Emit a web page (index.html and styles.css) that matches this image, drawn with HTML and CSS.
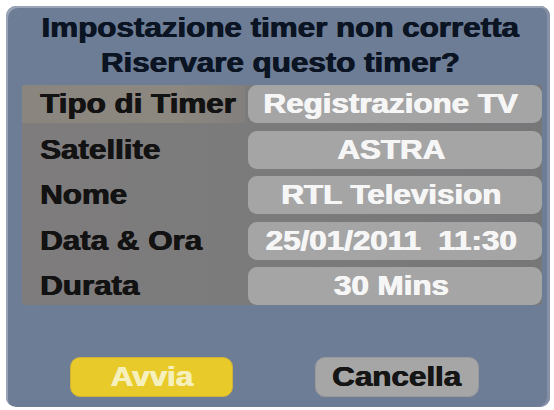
FILE: index.html
```html
<!DOCTYPE html>
<html lang="it">
<head>
<meta charset="utf-8">
<title>Timer</title>
<link rel="stylesheet" href="styles.css">
</head>
<body>
<div class="panel">
  <div class="title">
    <div class="tline"><span class="sx c">Impostazione timer non corretta</span></div>
    <div class="tline"><span class="sx c">Riservare questo timer?</span></div>
  </div>
  <div class="table">
    <div class="label first"><span class="sx l">Tipo di Timer</span></div>
    <div class="pill"><span class="sx c">Registrazione TV</span></div>
    <div class="label"><span class="sx l">Satellite</span></div>
    <div class="pill"><span class="sx c">ASTRA</span></div>
    <div class="label"><span class="sx l">Nome</span></div>
    <div class="pill"><span class="sx c">RTL Television</span></div>
    <div class="label"><span class="sx l">Data &amp; Ora</span></div>
    <div class="pill"><span class="sx c">25/01/2011&nbsp;&nbsp;11:30</span></div>
    <div class="label"><span class="sx l">Durata</span></div>
    <div class="pill"><span class="sx c">30 Mins</span></div>
  </div>
  <div class="buttons">
    <div class="btn yellow"><span class="sx c">Avvia</span></div>
    <div class="btn grey"><span class="sx c">Cancella</span></div>
  </div>
</div>
</body>
</html>
```
FILE: styles.css
```css
html, body {
  margin: 0;
  padding: 0;
  background: #ffffff;
}
body {
  width: 554px;
  height: 410px;
  overflow: hidden;
  font-family: "Liberation Sans", Arial, sans-serif;
  font-weight: bold;
  font-size: 28px;
}
.panel {
  margin: 6px 0 0 6px;
  width: 544px;
  height: 401px;
  box-sizing: border-box;
  padding-top: 4px;
  background: #6e7d96;
  border-radius: 10px;
  box-shadow: inset 2px 2px 0 #9aa4b6, inset -3px 0 0 #8590a6;
}
.sx {
  display: inline-block;
  transform: scaleX(1.12);
  white-space: nowrap;
  text-shadow: 0.6px 0 0 currentColor, -0.3px 0 0 currentColor;
}
.sx.c { transform-origin: 50% 50%; }
.sx.l { transform-origin: 0 50%; }
.title {
  color: #0b1423;
  text-align: center;
  padding-left: 4px;
}
.tline {
  height: 35px;
  line-height: 35px;
}
.table {
  margin: 5px 0 0 16px;
  width: 520px;
  display: grid;
  grid-template-columns: 223px 294px;
  column-gap: 3px;
  row-gap: 7.5px;
  grid-auto-rows: 38px;
  background: linear-gradient(90deg, #7e7c7c 0%, #7c7b7c 40%, #777779 100%);
  border-radius: 3px;
}
.label {
  color: #121212;
  line-height: 38px;
  padding-left: 18px;
}
.label.first {
  background: linear-gradient(90deg, #8a857e 0%, #8c877f 70%, #827f7d 100%);
  border-radius: 3px 0 0 0;
}
.pill {
  background: #a5a5a6;
  border-radius: 9px;
  color: #f6f6f6;
  text-align: center;
  line-height: 38px;
  padding-right: 8px;
}
.buttons {
  display: flex;
  gap: 82px;
  margin: 52px 0 0 64px;
}
.btn {
  width: 163px;
  height: 40px;
  box-sizing: border-box;
  border-radius: 10px;
  text-align: center;
  line-height: 38px;
}
.btn.yellow {
  background: #e8ca2b;
  border: 1px solid #cfb23a;
  color: #f5f0bc;
}
.btn.grey {
  width: 164px;
  background: #a6a6a7;
  border: 1px solid #9a9a9c;
  color: #151515;
}
```
